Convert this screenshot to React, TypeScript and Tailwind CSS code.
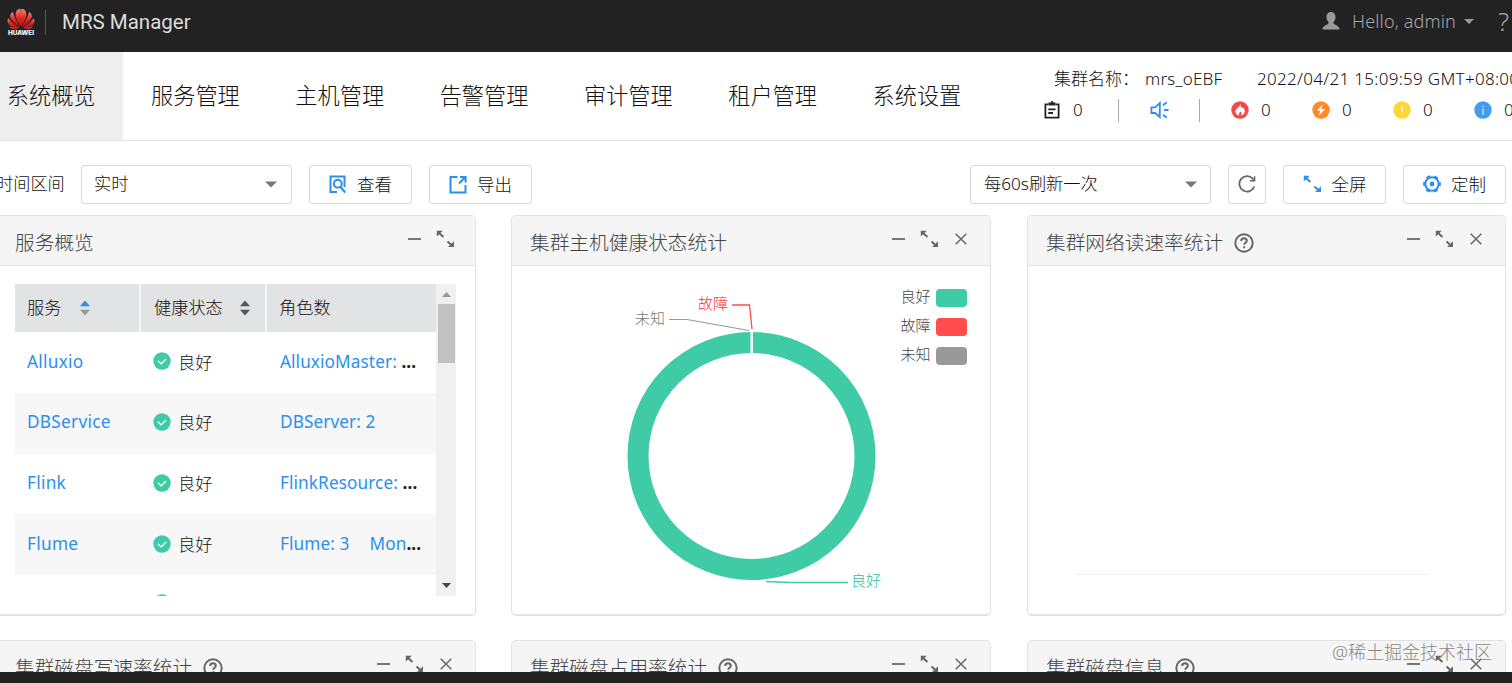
import type { ReactNode } from "react";

const navItems = ["系统概览", "服务管理", "主机管理", "告警管理", "审计管理", "租户管理", "系统设置"];

const services = [
  { name: "Alluxio", roles: ["AlluxioMaster: "], more: true },
  { name: "DBService", roles: ["DBServer: 2"], more: false },
  { name: "Flink", roles: ["FlinkResource: "], more: true },
  { name: "Flume", roles: ["Flume: 3", "Mon"], more: true },
];

const legend = [
  { label: "良好", color: "#3ecba5" },
  { label: "故障", color: "#ff4c4c" },
  { label: "未知", color: "#999999" },
];

/* ---------- icons ---------- */

function HuaweiLogo() {
  return (
    <svg width="28" height="28" viewBox="0 0 28 28" className="shrink-0">
      <defs>
        <linearGradient id="petal" x1="0" y1="0" x2="0" y2="1">
          <stop offset="0" stopColor="#f58a70" />
          <stop offset="0.5" stopColor="#e02a20" />
          <stop offset="1" stopColor="#b81414" />
        </linearGradient>
      </defs>
      <g fill="url(#petal)">
        <path d="M13.7 18.500C9.500 12 7.800 8 8.900 4.200c.6-2.200 2.600-3.200 4.600-3.400.8 5 .8 11 .2 17.700z" />
        <path d="M14.300 18.500C18.500 12 20.200 8 19.100 4.200c-.6-2.200-2.600-3.200-4.600-3.400-.8 5-.8 11-.2 17.700z" />
        <path d="M12.800 18.700C8.400 16 3.800 12.500 3.200 8.800c-.2-2.200.8-3.900 2.600-4.800C7.300 9 9.700 13.700 12.800 18.700z" />
        <path d="M15.200 18.700c4.400-2.700 9-6.200 9.600-9.900.2-2.200-.8-3.900-2.600-4.800-1.500 5-3.900 9.700-7 14.700z" />
        <path d="M12.200 19.100C7.500 19.200 2.600 18.500 1 15.200c-.8-1.800-.6-3.600.3-5 2.900 3.700 6.700 6.600 10.900 8.900z" />
        <path d="M15.800 19.100c4.700.1 9.600-.6 11.200-3.900.8-1.800.6-3.600-.3-5-2.900 3.700-6.700 6.600-10.900 8.900z" />
        <path d="M12 19.700c-2.500 1.700-6.200 2.200-8.500.1l-1.200-1.300c3 .8 6.500 1.200 9.700 1.200z" />
        <path d="M16 19.700c2.500 1.700 6.200 2.200 8.500.1l1.200-1.300c-3 .8-6.500 1.200-9.700 1.200z" />
      </g>
      <text
        x="1"
        y="26.500"
        textLength="26"
        lengthAdjust="spacingAndGlyphs"
        fill="#fff"
        fontSize="5.500"
        fontWeight="800"
        fontFamily="Inter, sans-serif"
      >
        HUAWEI
      </text>
    </svg>
  );
}

function UserIcon() {
  return (
    <svg width="18" height="18" viewBox="0 0 18 18" fill="#999" className="shrink-0">
      <path d="M9 0C6 0 4.500 2 4.500 5c0 2 .7 3.800 1.900 4.800v1.600C5.500 12.700.8 13.200.3 17.600h17.400c-.5-4.400-5.200-4.900-6.100-6.200V9.800c1.200-1 1.900-2.800 1.900-4.800C13.500 2 12 0 9 0z" />
    </svg>
  );
}

function TaskIcon() {
  return (
    <svg width="16" height="18" viewBox="0 0 16 18" fill="none" stroke="#222" strokeWidth="1.800" className="shrink-0">
      <path d="M4.500 3.300H1.400v13.300h13.200V3.300h-3.100" />
      <path d="M4.500 3h7M7.300 1.500h1.800" strokeWidth="3" />
      <path d="M4.300 8.300h7.200M4.300 12h4.700" />
    </svg>
  );
}

function SpeakerIcon() {
  return (
    <svg width="19" height="18" viewBox="0 0 19 18" fill="none" stroke="#2b8ff0" strokeWidth="1.800">
      <path d="M9.800 2v14L5 12H1.400V6.300H5z" />
      <path d="M13 4.300l3.800-3M14 9h4.500M13 13.700l3.800 3" />
    </svg>
  );
}

function AlarmIcon({ kind }: { kind: "critical" | "major" | "minor" | "info" }) {
  return (
    <svg width="18" height="18" viewBox="0 0 18 18" className="shrink-0">
      {kind === "critical" && (
        <>
          <circle cx="9" cy="9" r="8.700" fill="#f5484b" />
          <path d="M9.300 3c.3 2.400 1.300 3.200 2 4.500l.7-1.200c1.600 2 2.300 4.300 1.200 6-.8 1.300-2 2-3.200 2.200 1-1.600.5-3-.6-4-1 .9-1.800 2.200-1.200 4-2.200-.4-3.800-1.900-3.800-4C4.500 7.500 8.800 6.500 9.300 3z" fill="#fff" />
        </>
      )}
      {kind === "major" && (
        <>
          <circle cx="9" cy="9" r="8.700" fill="#ff8a2b" />
          <path d="M10.600 3.400L4.800 9.800h3.400l-1.100 4.900 6-6.700H9.600z" fill="#fff" />
        </>
      )}
      {kind === "minor" && (
        <>
          <circle cx="9" cy="9" r="8.700" fill="#fdd835" />
          <path d="M9 4.300v6.200M9 12v1.700" stroke="#fff" strokeWidth="1.300" />
        </>
      )}
      {kind === "info" && (
        <>
          <circle cx="9" cy="9" r="8.700" fill="#3f9cf0" />
          <path d="M9 4.700v1.500M9 7.500v6.200" stroke="#d8ecff" strokeWidth="1.300" />
        </>
      )}
    </svg>
  );
}

function ViewIcon() {
  return (
    <svg width="18" height="19" viewBox="0 0 18 19" fill="none" stroke="#2b8ff0" strokeWidth="2">
      <path d="M8 17H1.500V1.500h14V12" />
      <circle cx="8.800" cy="8.700" r="3.900" />
      <path d="M11.500 12l4.700 5.500" />
    </svg>
  );
}

function ExportIcon() {
  return (
    <svg width="18" height="19" viewBox="0 0 18 19" fill="none" stroke="#2b8ff0" strokeWidth="2">
      <path d="M8.500 2H1.500v15.500h15V10" />
      <path d="M10 8.500l6-6M11 1.900h5.600v5.600" />
    </svg>
  );
}

function ExpandIcon({ color = "#666" }: { color?: string }) {
  return (
    <svg width="19" height="18" viewBox="0 0 19 18" fill={color} stroke={color} className="shrink-0">
      <path d="M3 3l4.500 4M11.500 11.500l4.500 4" strokeWidth="2" />
      <path d="M.8.700h6L.8 6.500zM18 11.300v5.800h-6z" stroke="none" />
    </svg>
  );
}

function RefreshIcon() {
  return (
    <svg width="18" height="18" viewBox="0 0 18 18" fill="none" stroke="#666" strokeWidth="1.800">
      <path d="M16.300 11.500A7.700 7.700 0 1 1 14.700 3.600L16.400 5.300" />
      <path d="M16.600 1.300v4.500h-4.800" strokeWidth="1.500" />
    </svg>
  );
}

function GearIcon() {
  return (
    <svg width="18" height="18" viewBox="0 0 18 18" fill="none" stroke="#2b8ff0">
      <circle cx="9" cy="9" r="6.700" strokeWidth="2" />
      <circle cx="9" cy="9" r="8" strokeWidth="1.700" strokeDasharray="4.200 4.180" strokeDashoffset="2.100" />
      <circle cx="9" cy="9" r="2.400" fill="#2b8ff0" stroke="none" />
    </svg>
  );
}

function HelpIcon() {
  return (
    <svg width="20" height="20" viewBox="0 0 20 20" fill="none" stroke="#666" strokeWidth="2">
      <circle cx="10" cy="10" r="8.700" />
      <path d="M7.200 8c0-1.800 1.200-2.700 2.800-2.700s2.800 1 2.800 2.500c0 1.900-2.600 2-2.600 4M10.200 13.300v2" strokeWidth="2" />
    </svg>
  );
}

function CheckIcon() {
  return (
    <svg width="18" height="18" viewBox="0 0 18 18" className="shrink-0">
      <circle cx="9" cy="9" r="8.700" fill="#3ecba5" />
      <path d="M4.900 8.700l3.200 3.200 5-4.900" fill="none" stroke="#fff" strokeWidth="1.300" />
    </svg>
  );
}

function Caret() {
  return (
    <svg width="12" height="7" viewBox="0 0 12 7" fill="#777">
      <path d="M0 .5h12L6 6.500z" />
    </svg>
  );
}

function SortIcon({ up, down }: { up: string; down: string }) {
  return (
    <svg width="10" height="16" viewBox="0 0 10 16">
      <path d="M0 6.300L5 .5l5 5.800z" fill={up} />
      <path d="M0 9.700l5 5.800 5-5.800z" fill={down} />
    </svg>
  );
}

/* ---------- building blocks ---------- */

function ToolButton({ icon, children }: { icon: ReactNode; children: ReactNode }) {
  return (
    <button className="flex h-[39px] w-[103px] shrink-0 items-center justify-center gap-[10px] rounded-[3px] border border-[#d9d9d9] bg-white text-[17.500px] text-[#111]">
      {icon}
      {children}
    </button>
  );
}

interface PanelProps {
  title: string;
  help?: boolean;
  closable?: boolean;
  children?: ReactNode;
}

function Panel({ title, help, closable = true, children }: PanelProps) {
  return (
    <section className="h-[401px] max-w-[480px] overflow-hidden rounded-[5px] border border-[#e2e2e2] border-b-2 bg-white">
      <header
        className={`flex h-[50px] justify-between border-b border-[#e2e2e2] bg-[#f5f5f5] pl-[18px] ${closable ? "pr-[23px]" : "pr-[20px]"}`}
      >
        <h2 className="flex items-center gap-[11px] pt-[4px] text-[19.700px] text-[#444]">
          {title}
          {help && <HelpIcon />}
        </h2>
        <div className="flex h-[46px] items-center">
          <span className="mr-[15px] h-[1.500px] w-[13px] bg-[#777]" />
          <ExpandIcon />
          {closable && (
            <svg width="12" height="12" viewBox="0 0 12 12" stroke="#666" strokeWidth="1.500" className="ml-[16px]">
              <path d="M.7.700l10.600 10.600M11.300.7L.7 11.300" />
            </svg>
          )}
        </div>
      </header>
      {children}
    </section>
  );
}

function ServiceTable() {
  return (
    <div className="ml-[18px] mt-[18px] flex h-[312px] w-[441px] overflow-hidden text-[17.200px] text-[#111]">
      <div className="w-[421px] shrink-0">
        <div className="flex h-[48px] bg-[#e1e3e4]">
          <div className="flex w-[126px] items-center gap-[19px] border-r-2 border-white/70 pl-[12px]">
            服务
            <SortIcon up="#2b8ff0" down="#999" />
          </div>
          <div className="flex w-[126px] items-center gap-[17px] border-r-2 border-white/70 pl-[13px]">
            健康状态
            <SortIcon up="#555" down="#555" />
          </div>
          <div className="flex items-center pl-[12px]">角色数</div>
        </div>
        {services.map((s, i) => (
          <div key={s.name} className={`flex h-[60.800px] items-center pb-[2px] ${i % 2 ? "bg-[#f7f7f7]" : "bg-white"}`}>
            <a className="w-[126px] pl-[12px] font-normal tracking-[0.3px] text-[#2b8ff0]">{s.name}</a>
            <div className="flex w-[126px] items-center gap-[7px] pl-[12px]">
              <CheckIcon />
              <span className="pt-[2px]">良好</span>
            </div>
            <div className="flex whitespace-pre pl-[13px] font-normal tracking-[0.1px] text-[#2b8ff0]">
              {s.roles.map((r, n) => (
                <span key={r} className={n ? "ml-[20px]" : ""}>
                  {r}
                </span>
              ))}
              {s.more && <b className="text-[#222]">...</b>}
            </div>
          </div>
        ))}
        <div className="pl-[138px] pt-[19px]">
          <CheckIcon />
        </div>
      </div>
      <div className="flex w-[20px] flex-col items-center justify-between bg-[#f0f0f0] pb-[8px] pt-[8px]">
        <div className="flex flex-col items-center gap-[7px]">
          <svg width="9" height="5" viewBox="0 0 9 5" fill="#999">
            <path d="M0 5L4.500 0 9 5z" />
          </svg>
          <div className="h-[59px] w-[17px] bg-[#c1c1c1]" />
        </div>
        <svg width="9" height="5" viewBox="0 0 9 5" fill="#444">
          <path d="M0 0h9L4.500 5z" />
        </svg>
      </div>
    </div>
  );
}

function HostHealthChart() {
  return (
    <svg width="478" height="348" viewBox="0 0 478 348" fontSize="15">
      <circle cx="239.500" cy="190" r="113.500" fill="none" stroke="#3ecba5" strokeWidth="21" />
      <path d="M239.700 64v25" stroke="#fff" strokeWidth="2.500" />
      <path d="M220 39h17.500l2.500 24" fill="none" stroke="#ff4c4c" strokeWidth="1.300" />
      <path d="M157 53.500h18l62 11" fill="none" stroke="#999" strokeWidth="1.200" />
      <path d="M254 315.500l24 1h58" fill="none" stroke="#3ecba5" strokeWidth="1.300" />
      <text x="186" y="43" fill="#ff3030">故障</text>
      <text x="123" y="58" fill="#777">未知</text>
      <text x="339" y="320" fill="#2bc097">良好</text>
      {legend.map((l, i) => (
        <g key={l.label}>
          <text x="388.500" y={36 + i * 29} fill="#444">
            {l.label}
          </text>
          <rect x="424" y={23 + i * 29} width="31" height="18" rx="4" fill={l.color} />
        </g>
      ))}
    </svg>
  );
}

export default function App() {
  return (
    <div className="relative flex h-[683px] w-[1512px] flex-col overflow-hidden whitespace-nowrap bg-white font-['Noto_Sans','Noto_Sans_CJK_SC',sans-serif] font-light">
      {/* Top bar */}
      <div className="flex h-[52px] shrink-0 justify-between bg-[#222]">
        <div className="flex h-[44px] items-center pl-[7px]">
          <HuaweiLogo />
          <span className="ml-[10px] h-[25px] w-px bg-[#555]" />
          <span className="ml-[16px] font-[Roboto] text-[20.500px] font-normal text-[#ddd]">MRS Manager</span>
        </div>
        <div className="flex h-[42px] w-[190px] shrink-0 items-center text-[18px] text-[#a5a5a5]">
          <UserIcon />
          <span className="ml-[12px] w-[105px] shrink-0 tracking-[0.150px]">Hello, admin</span>
          <svg width="10" height="5" viewBox="0 0 10 5" fill="#999" className="ml-[7px] shrink-0">
            <path d="M0 0h10L5 5z" />
          </svg>
          <span className="ml-[24px] text-[26px]">?</span>
        </div>
      </div>

      {/* Main navigation */}
      <div className="flex h-[89px] shrink-0 justify-between border-b border-[#e5e5e5]">
        <nav className="-ml-[21px] flex text-[22.200px] text-[#111]">
          {navItems.map((item, i) => (
            <a
              key={item}
              className={`flex w-[144.300px] items-center justify-center ${i === 0 ? "bg-[#eee]" : ""}`}
            >
              {item}
            </a>
          ))}
        </nav>
        <div className="flex w-[470px] shrink-0 flex-col pt-[14px] text-[17px] text-[#111]">
          <div className="flex h-[26px] items-center pl-[12px]">
            <span className="w-[91px] shrink-0">集群名称：</span>
            <span className="w-[112px] shrink-0 tracking-[0.200px]">mrs_oEBF</span>
            <span className="tracking-[0.300px]">2022/04/21 15:09:59 GMT+08:00</span>
          </div>
          <div className="mt-[5px] flex h-[26px] items-center pl-[2px]">
            <TaskIcon />
            <span className="ml-[13px] w-[45px] shrink-0">0</span>
            <span className="h-[23px] w-px shrink-0 bg-[#aaa]" />
            <span className="ml-[31px] w-[49px] shrink-0">
              <SpeakerIcon />
            </span>
            <span className="mr-[31px] h-[23px] w-px shrink-0 bg-[#aaa]" />
            {(["critical", "major", "minor", "info"] as const).map((kind) => (
              <span key={kind} className="flex w-[81px] shrink-0 items-center gap-[12px]">
                <AlarmIcon kind={kind} />0
              </span>
            ))}
          </div>
        </div>
      </div>

      {/* Toolbar */}
      <div className="flex h-[74px] shrink-0 items-center pt-[12px] text-[17.200px] text-[#111]">
        <span className="-ml-[4px] w-[85px]">时间区间</span>
        <div className="flex h-[39px] w-[211px] items-center justify-between rounded-[3px] border border-[#d9d9d9] pl-[12px] pr-[14px]">
          实时
          <Caret />
        </div>
        <div className="ml-[17px] flex gap-[17px]">
          <ToolButton icon={<ViewIcon />}>查看</ToolButton>
          <ToolButton icon={<ExportIcon />}>导出</ToolButton>
        </div>
        <div className="ml-auto mr-[6px] flex gap-[17px]">
          <div className="flex h-[39px] w-[241px] items-center justify-between rounded-[3px] border border-[#d9d9d9] pl-[13px] pr-[13px]">
            每60s刷新一次
            <Caret />
          </div>
          <button className="flex h-[39px] w-[38px] items-center justify-center rounded-[3px] border border-[#d9d9d9]">
            <RefreshIcon />
          </button>
          <ToolButton icon={<ExpandIcon color="#2b8ff0" />}>全屏</ToolButton>
          <ToolButton icon={<GearIcon />}>定制</ToolButton>
        </div>
      </div>

      {/* Dashboard panels */}
      <div className="-ml-[4px] grid shrink-0 grid-cols-[480px_481px_479px] gap-x-[35px] gap-y-[24px]">
        <Panel title="服务概览" closable={false}>
          <ServiceTable />
        </Panel>
        <Panel title="集群主机健康状态统计">
          <HostHealthChart />
        </Panel>
        <Panel title="集群网络读速率统计" help>
          <div className="ml-[48px] mt-[308px] h-px w-[353px] bg-[#eee]" />
        </Panel>
        <Panel title="集群磁盘写速率统计" help />
        <Panel title="集群磁盘占用率统计" help />
        <Panel title="集群磁盘信息" help />
      </div>

      {/* Watermark and bottom edge */}
      <span className="absolute right-[20px] top-[639px] text-[18px] text-[#888]">@稀土掘金技术社区</span>
      <div className="absolute inset-x-0 bottom-0 h-[11.500px] bg-[#222]" />
    </div>
  );
}
